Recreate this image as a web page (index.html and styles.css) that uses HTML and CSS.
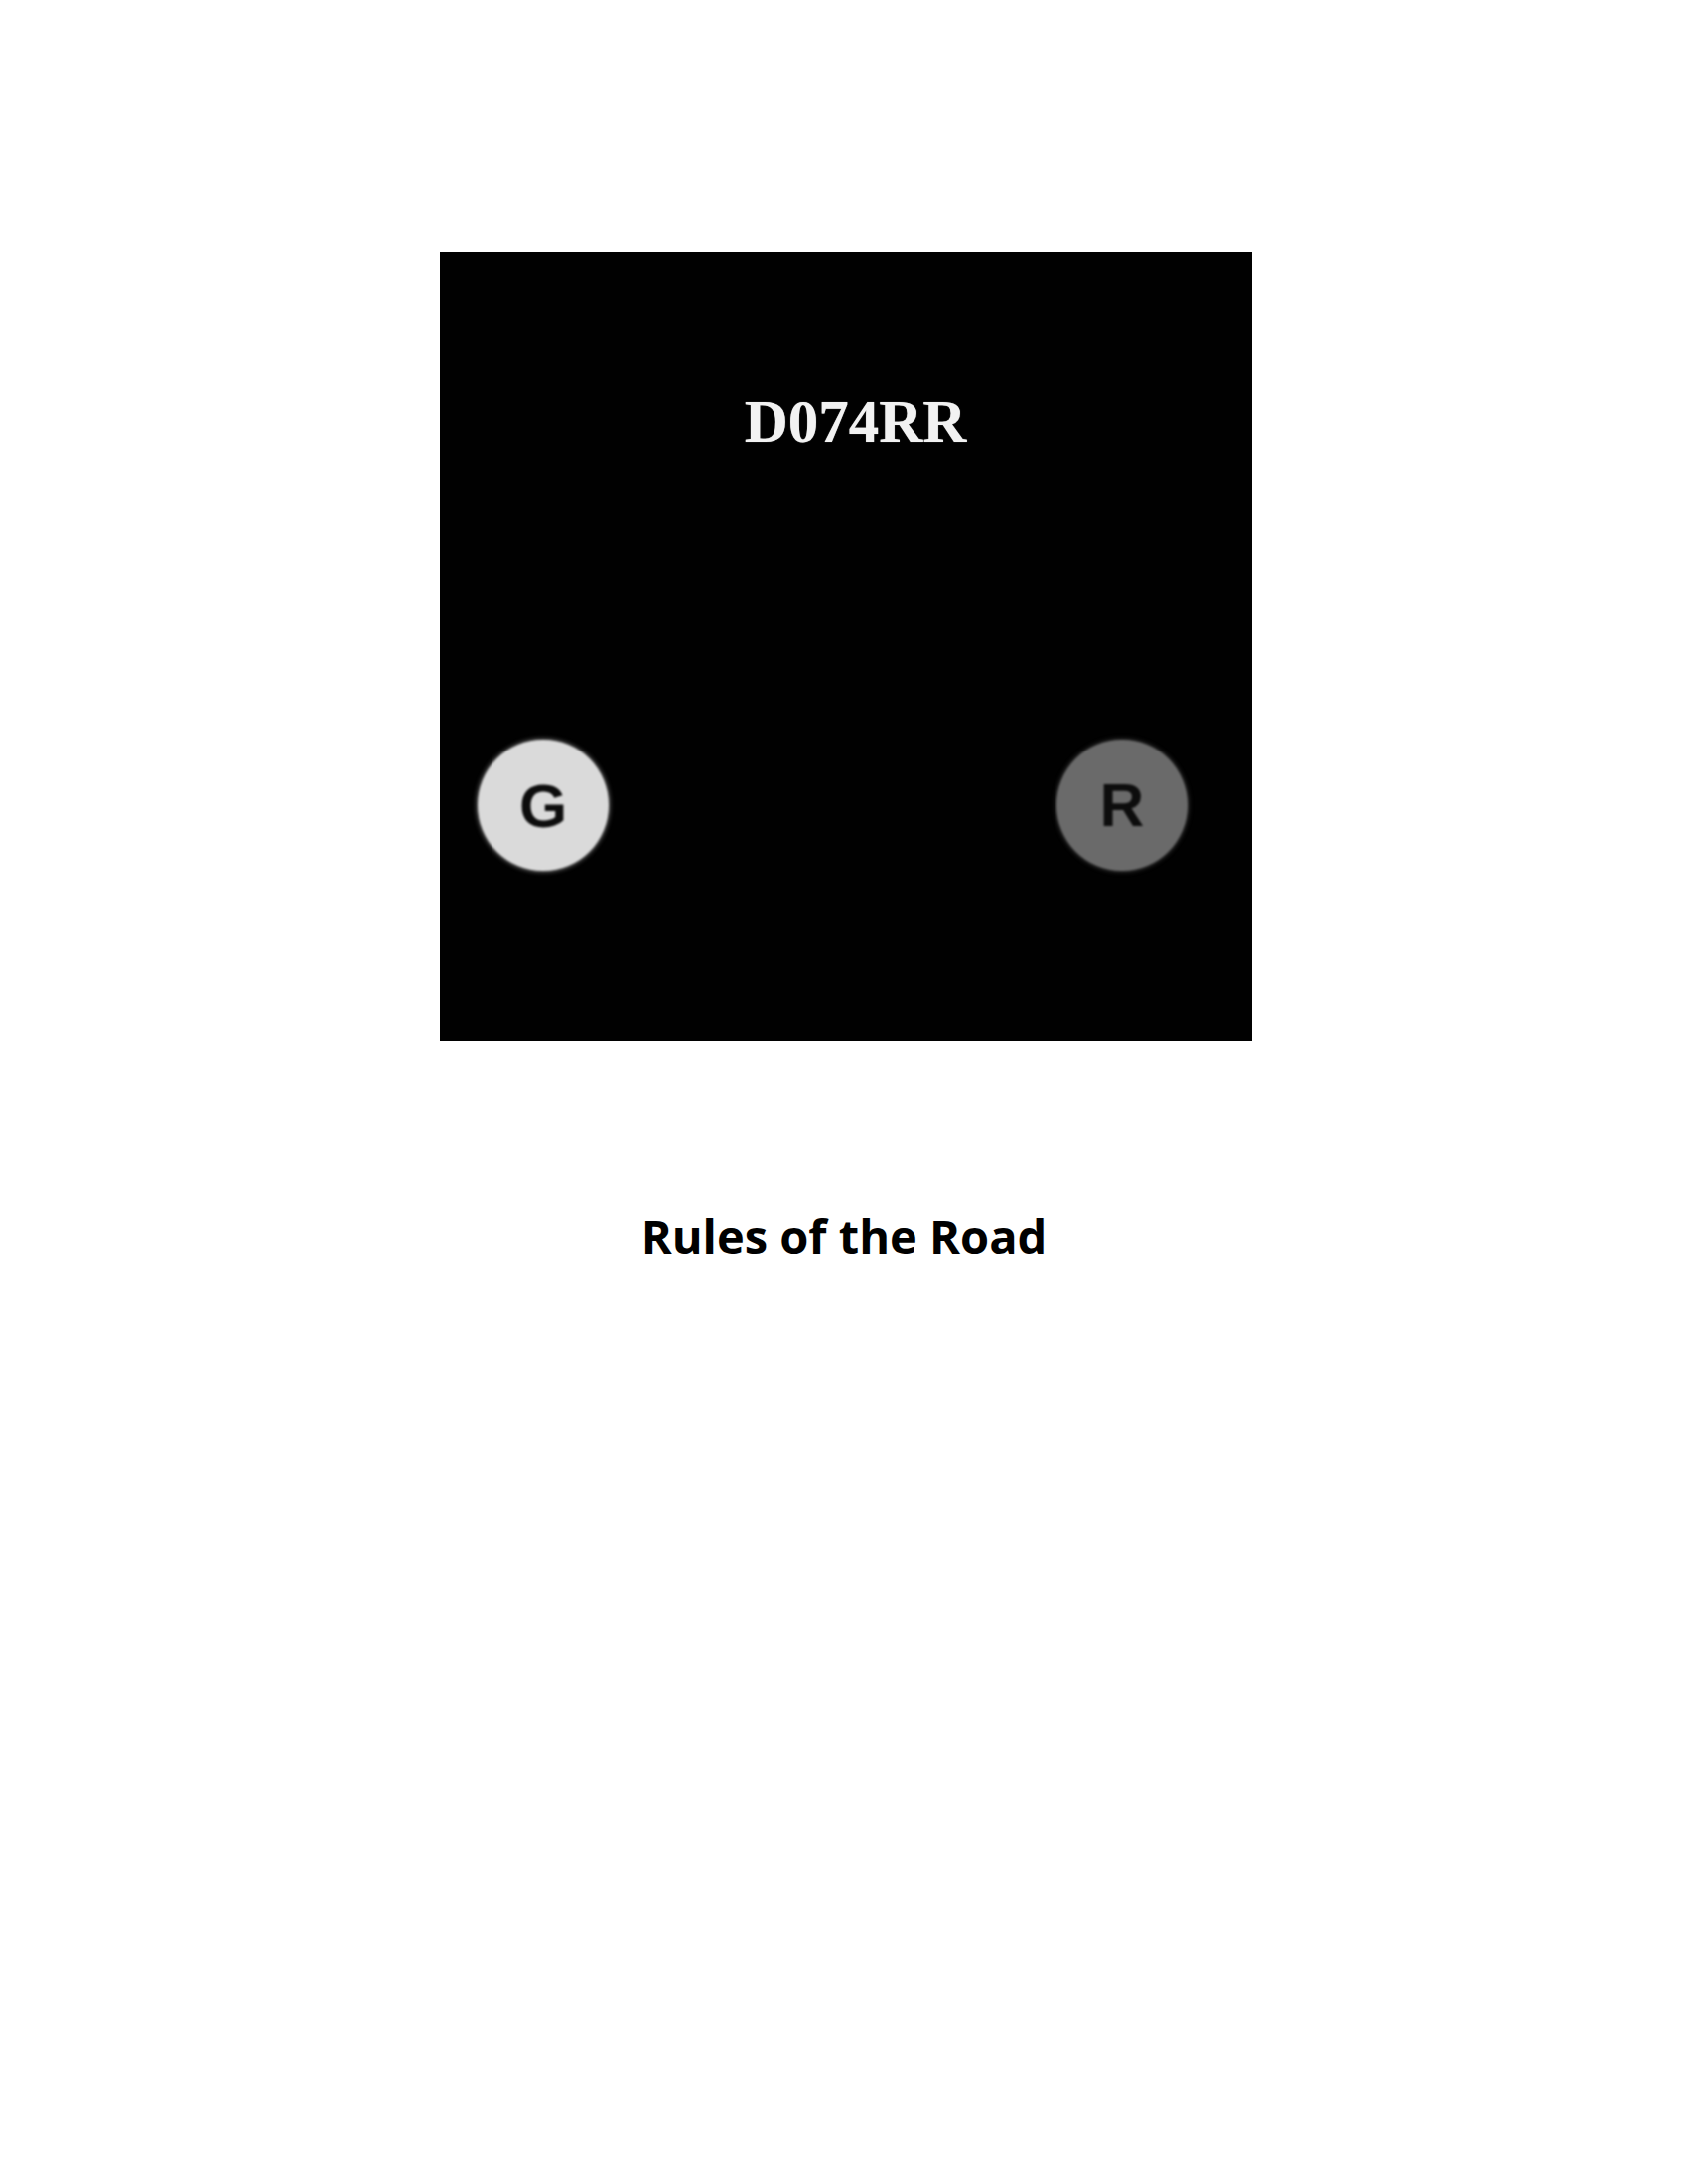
FILE: index.html
```html
<!DOCTYPE html>
<html lang="en">
<head>
<meta charset="utf-8">
<title>Rules of the Road</title>
<link rel="stylesheet" href="styles.css">
</head>
<body>
<main class="page">
  <section class="panel">
    <div class="code">D074RR</div>
    <div class="lights">
      <div class="light light-green"><span>G</span></div>
      <div class="light light-red"><span>R</span></div>
    </div>
  </section>
  <h1 class="title">Rules of the Road</h1>
</main>
</body>
</html>
```

FILE: styles.css
```css
html, body {
  margin: 0;
  padding: 0;
  background: #ffffff;
}

.page {
  width: 1700px;
  min-height: 2200px;
  display: flex;
  flex-direction: column;
  align-items: center;
  padding-top: 254px;
  box-sizing: border-box;
}

.panel {
  width: 818px;
  height: 795px;
  margin-left: 4px;
  background: #010101;
  box-sizing: border-box;
  padding-top: 140px;
  display: flex;
  flex-direction: column;
}

.code {
  font-family: "Liberation Serif", "Times New Roman", serif;
  font-weight: 700;
  font-size: 61px;
  line-height: 61px;
  color: #f2f2f2;
  text-align: center;
  padding-left: 19px;
  text-shadow: 0 0 1px rgba(255,255,255,0.6);
}

.lights {
  margin-top: 290px;
  display: flex;
  justify-content: space-between;
  padding: 0 65px 0 38px;
}

.light {
  width: 132px;
  height: 132px;
  border-radius: 50%;
  display: flex;
  align-items: center;
  justify-content: center;
  filter: blur(1.2px);
}

.light span {
  font-family: "Liberation Sans", Arial, sans-serif;
  font-weight: 700;
  font-size: 62px;
  line-height: 1;
  color: #0d0d0d;
}

.light-green {
  background: #dadada;
  box-shadow: 0 0 4px 1px rgba(218,218,218,0.5);
}

.light-green span {
  margin-top: 2px;
}

.light-red {
  background: #6a6a6a;
  box-shadow: 0 0 4px 1px rgba(106,106,106,0.5);
}

.light-red span {
  margin-top: -1px;
}

.title {
  margin: 168px 0 0 0;
  font-family: "Open Sans", "Noto Sans", sans-serif;
  font-weight: 700;
  font-size: 47px;
  line-height: 1.2;
  color: #000000;
  text-align: center;
}
```
